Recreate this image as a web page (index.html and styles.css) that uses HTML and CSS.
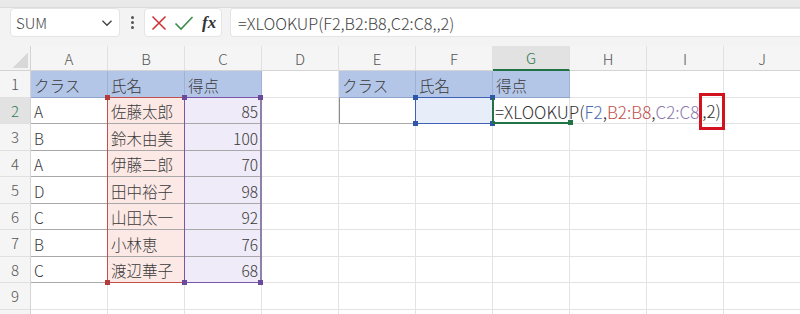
FILE: index.html
```html
<!DOCTYPE html>
<html lang="ja">
<head>
    <meta charset="UTF-8">
    <title>XLOOKUP</title>
    <link rel="stylesheet" href="styles.css">
</head>
<body>
    <div class="topbar">
        <div class="namebox">
            <span>SUM</span>
            <svg class="chev" width="12" height="8" viewBox="0 0 12 8"><path d="M1.5 1.8 6 6.2 10.5 1.8" fill="none" stroke="#444" stroke-width="1.4"/></svg>
        </div>
        <div class="dots"><i></i><i></i><i></i></div>
        <div class="fxbox">
            <svg width="18" height="18" viewBox="0 0 18 18"><path d="M2.5 2.5 15.5 15.5M15.5 2.5 2.5 15.5" stroke="#d13438" stroke-width="1.6" fill="none"/></svg>
            <svg width="20" height="18" viewBox="0 0 20 18"><path d="M1.5 9.5 7 15 18.5 3" stroke="#3c8a4c" stroke-width="1.6" fill="none"/></svg>
            <span class="fx">fx</span>
        </div>
        <div class="formula">=XLOOKUP(F2,B2:B8,C2:C8,,2)</div>
    </div>

    <div class="sheet">
        <div class="cells">
            <div class="corner"></div>
            <div class="ch">A</div><div class="ch">B</div><div class="ch">C</div><div class="ch">D</div><div class="ch">E</div>
            <div class="ch">F</div><div class="ch sel">G</div><div class="ch">H</div><div class="ch">I</div><div class="ch">J</div>

            <div class="rh">1</div>
            <div class="c hd">クラス</div><div class="c hd">氏名</div><div class="c hd">得点</div><div class="c"></div>
            <div class="c hd">クラス</div><div class="c hd">氏名</div><div class="c hd">得点</div>
            <div class="c"></div><div class="c"></div><div class="c"></div>

            <div class="rh sel">2</div>
            <div class="c tb">A</div><div class="c tb pink">佐藤太郎</div><div class="c tb lilac num">85</div><div class="c"></div>
            <div class="c tb first"></div><div class="c tb sky"></div><div class="c"></div>
            <div class="c"></div><div class="c"></div><div class="c"></div>

            <div class="rh">3</div>
            <div class="c tb">B</div><div class="c tb pink">鈴木由美</div><div class="c tb lilac num">100</div>
            <div class="c"></div><div class="c"></div><div class="c"></div><div class="c"></div><div class="c"></div><div class="c"></div><div class="c"></div>

            <div class="rh">4</div>
            <div class="c tb">A</div><div class="c tb pink">伊藤二郎</div><div class="c tb lilac num">70</div>
            <div class="c"></div><div class="c"></div><div class="c"></div><div class="c"></div><div class="c"></div><div class="c"></div><div class="c"></div>

            <div class="rh">5</div>
            <div class="c tb">D</div><div class="c tb pink">田中裕子</div><div class="c tb lilac num">98</div>
            <div class="c"></div><div class="c"></div><div class="c"></div><div class="c"></div><div class="c"></div><div class="c"></div><div class="c"></div>

            <div class="rh">6</div>
            <div class="c tb">C</div><div class="c tb pink">山田太一</div><div class="c tb lilac num">92</div>
            <div class="c"></div><div class="c"></div><div class="c"></div><div class="c"></div><div class="c"></div><div class="c"></div><div class="c"></div>

            <div class="rh">7</div>
            <div class="c tb">B</div><div class="c tb pink">小林恵</div><div class="c tb lilac num">76</div>
            <div class="c"></div><div class="c"></div><div class="c"></div><div class="c"></div><div class="c"></div><div class="c"></div><div class="c"></div>

            <div class="rh">8</div>
            <div class="c tb">C</div><div class="c tb pink">渡辺華子</div><div class="c tb lilac num">68</div>
            <div class="c"></div><div class="c"></div><div class="c"></div><div class="c"></div><div class="c"></div><div class="c"></div><div class="c"></div>

            <div class="rh">9</div>
            <div class="c"></div><div class="c"></div><div class="c"></div><div class="c"></div><div class="c"></div>
            <div class="c"></div><div class="c"></div><div class="c"></div><div class="c"></div><div class="c"></div>

            <div class="rh"></div>
            <div class="c"></div><div class="c"></div><div class="c"></div><div class="c"></div><div class="c"></div>
            <div class="c"></div><div class="c"></div><div class="c"></div><div class="c"></div><div class="c"></div>
        </div>

        <!-- reference highlights drawn over the grid while editing G2 -->
        <div class="marks">
            <div class="range red"><i class="h tl"></i><i class="h bl"></i></div>
            <div class="range purple"><i class="h tl"></i><i class="h tr"></i><i class="h bl"></i><i class="h br"></i></div>
            <div class="range blue"><i class="h tl"></i><i class="h tr"></i><i class="h bl"></i><i class="h br"></i></div>
            <div class="active"><i class="h br"></i></div>
            <div class="editor">=XLOOKUP(<span class="r-blue">F2</span>,<span class="r-red">B2:B8</span>,<span class="r-purple">C2:C8</span><span class="callout">,2)</span></div>
        </div>
    </div>
</body>
</html>
```
FILE: styles.css
```css
* {
    box-sizing: border-box;
}
body {
    margin: 0;
    width: 800px;
    height: 314px;
    overflow: hidden;
    background: #fff;
    font-family: "Noto Sans CJK JP", "Noto Sans", sans-serif;
    font-weight: 300;
    color: #333;
}

/* formula bar */
.topbar {
    height: 46px;
    display: flex;
    align-items: center;
    padding: 8px 0 9px 10px;
    background: linear-gradient(#e9e9e9 0 7px, #dcdcdc 7px 8px, #f3f3f3 8px);
}
.namebox {
    width: 110px;
    height: 29px;
    background: #fff;
    border-radius: 4px;
    border: 1px solid #e4e4e4;
    display: flex;
    align-items: center;
    padding: 0 6px 0 5px;
    font-size: 15px;
    color: #444;
}
.chev {
    margin-left: auto;
}
.dots {
    width: 24px;
    display: flex;
    flex-direction: column;
    align-items: center;
    gap: 2px;
}
.dots i {
    width: 3px;
    height: 3px;
    border-radius: 50%;
    background: #555;
}
.fxbox {
    width: 78px;
    height: 29px;
    background: #fff;
    border-radius: 4px;
    border: 1px solid #e4e4e4;
    display: flex;
    align-items: center;
    gap: 6px;
    padding-left: 5px;
}
.fx {
    font-family: "Liberation Serif", serif;
    font-style: italic;
    font-weight: bold;
    font-size: 17px;
    color: #333;
    margin-left: 2px;
}
.formula {
    flex: 1;
    height: 29px;
    margin-left: 8px;
    background: #fff;
    border-radius: 4px 0 0 4px;
    border: 1px solid #e4e4e4;
    border-right: 0;
    display: flex;
    align-items: center;
    padding-left: 7px;
    font-size: 16.2px;
    color: #444;
}

/* sheet grid */
.sheet {
    display: grid;
}
.cells,
.marks {
    grid-area: 1 / 1;
    display: grid;
    grid-template-columns: 31px repeat(10, 77px);
    grid-template-rows: 25px repeat(10, 26.5px);
}
.corner {
    background: #f3f3f3 linear-gradient(135deg, transparent 0 58%, #d8d8d8 58% 100%) no-repeat 10px 4px / 18px 18px;
    border-right: 1px solid #d4d4d4;
    border-bottom: 1px solid #d4d4d4;
}
.ch,
.rh {
    background: #f5f5f5;
    color: #555;
    font-size: 15px;
    display: flex;
    align-items: center;
    justify-content: center;
}
.ch {
    border-right: 1px solid #e0e0e0;
    border-bottom: 1px solid #d4d4d4;
}
.rh {
    border-right: 1px solid #d4d4d4;
    border-bottom: 1px solid #e0e0e0;
}
.ch.sel {
    background: #e2e2e2;
    color: #2f7a4d;
    border-bottom: 2px solid #217346;
}
.rh.sel {
    background: #e2e2e2;
    color: #2f7a4d;
}
.c {
    border-right: 1px solid #e3e3e3;
    border-bottom: 1px solid #e3e3e3;
    font-size: 15.5px;
    color: #3a3a3a;
    display: flex;
    align-items: center;
    padding: 2px 3px 0;
    white-space: nowrap;
}
.hd {
    background: #b4c6e7;
    border-right-color: #9fb2d6;
    border-bottom-color: #8ea4cc;
}
.tb {
    border-right-color: #a8a8a8;
    border-bottom-color: #a8a8a8;
}
.first {
    box-shadow: inset 1px 0 #8a8a8a;
}
.pink {
    background: #fce9e6;
}
.lilac {
    background: #efebf8;
}
.sky {
    background: #e8eef9;
}
.num {
    justify-content: flex-end;
}

/* formula reference ranges */
.marks {
    pointer-events: none;
}
.range {
    position: relative;
    margin: -1px 0 0 -1px;
}
.red {
    grid-column: 3;
    grid-row: 3 / span 7;
    border: 1.5px solid #c0504d;
}
.purple {
    grid-column: 4;
    grid-row: 3 / span 7;
    border: 1.5px solid #7b55a8;
    border-right: 2.5px solid #8c83a6;
}
.blue {
    grid-column: 7;
    grid-row: 3;
    border: 1.5px solid #3d62b3;
}
.h {
    position: absolute;
    width: 5px;
    height: 5px;
}
.red .h { background: #b33c3a; }
.purple .h { background: #6a4a9a; }
.blue .h { background: #2f56a8; }
.tl { left: -3px; top: -3px; }
.tr { right: -3px; top: -3px; }
.bl { left: -3px; bottom: -3px; }
.br { right: -3px; bottom: -3px; }
.active {
    grid-column: 8;
    grid-row: 3;
    position: relative;
    margin-left: -1px;
    border-left: 2px solid #217346;
    border-bottom: 2px solid #217346;
}
.active .h {
    background: #217346;
}
.editor {
    grid-column: 8 / span 4;
    grid-row: 3;
    display: flex;
    align-items: center;
    padding: 2px 0 0 2px;
    font-size: 17px;
    color: #333;
    white-space: nowrap;
}
.r-blue { color: #4a6db5; }
.r-red { color: #c0504d; }
.r-purple { color: #8a78ad; }
.callout {
    display: inline-block;
    border: 3px solid #d3121f;
    padding: 4px 1px 5px 0;
    line-height: 1.3;
}
```
